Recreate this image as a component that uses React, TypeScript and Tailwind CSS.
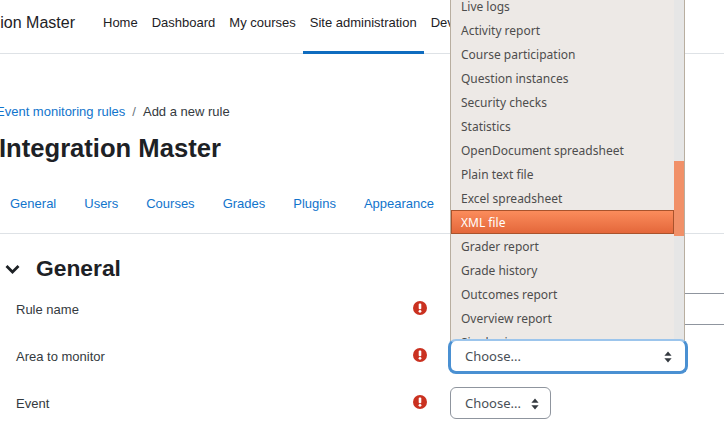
const mainNav = ['Home', 'Dashboard', 'My courses'];
const tabs = ['General', 'Users', 'Courses', 'Grades', 'Plugins', 'Appearance'];
const before = ['Live logs', 'Activity report', 'Course participation', 'Question instances', 'Security checks', 'Statistics', 'OpenDocument spreadsheet', 'Plain text file', 'Excel spreadsheet'];
const after = ['Grader report', 'Grade history', 'Outcomes report', 'Overview report', 'Single view'];

function Alert() {
  return (
    <svg className="w-[14px] h-[14px]" viewBox="0 0 14 14">
      <circle cx="7" cy="7" r="7" fill="#ca3120" />
      <rect x="5.7" y="2.6" width="2.6" height="5.6" rx="1" fill="#fff" />
      <circle cx="7" cy="10.3" r="1.4" fill="#fff" />
    </svg>
  );
}

function Arrows() {
  return (
    <svg className="w-2 h-3" viewBox="0 0 8 12" fill="#343a40">
      <path d="M4 0.5 L7.6 4.8 H0.4 Z" />
      <path d="M4 11.5 L7.6 7.2 H0.4 Z" />
    </svg>
  );
}

function Row({ label, children }: { label: string; children?: React.ReactNode }) {
  return (
    <div className="flex items-center h-[47px]">
      <div className="w-[413px] pl-4 text-[13px] text-[#343a40]">{label}</div>
      <div className="w-[37px] -mt-[3px]"><Alert /></div>
      {children}
    </div>
  );
}

export default function App() {
  return (
    <div className="relative h-[429px] w-[724px] overflow-hidden bg-white font-['Liberation_Sans',Arial,sans-serif]">
      {/* Top nav */}
      <header className="flex h-[54px] items-stretch border-b border-[#dee2e6]">
        <div className="flex w-[96px] items-center justify-end overflow-hidden pb-[8px] pr-[21px] text-[16px] text-[#1d2125] whitespace-nowrap">
          ion Master
        </div>
        {mainNav.map(n => (
          <a key={n} className="flex items-center px-[7px] pb-[8px] text-[13px] text-[#1d2125]">{n}</a>
        ))}
        <a className="-mb-px flex items-center border-b-[3px] border-[#0f6cbf] px-[7px] pb-[6px] text-[13px] text-[#1d2125]">Site administration</a>
        <a className="flex items-center px-[7px] pb-[8px] text-[13px] text-[#1d2125]">Dev</a>
      </header>

      {/* Breadcrumb + title */}
      <div className="mt-[50px] flex items-center -ml-[4px] text-[13px] leading-4">
        <a className="text-[#1174cc]">Event monitoring rules</a>
        <span className="mx-[7px] text-[#6a737b]">/</span>
        <span className="text-[#343a40]">Add a new rule</span>
      </div>
      <h1 className="mt-[12px] -ml-[1px] text-[25.6px] leading-8 font-bold text-[#1d2125]">Integration Master</h1>

      {/* Tabs */}
      <nav className="mt-[14px] flex h-[56px] items-center gap-[28px] border-b border-[#dee2e6] pb-[3px] pl-[10px] text-[13px] text-[#1174cc]">
        {tabs.map(t => <a key={t}>{t}</a>)}
      </nav>

      {/* Form */}
      <div className="mt-[21px] flex items-center h-[26px] pl-[5px]">
        <svg className="w-[15px] h-[15px]" viewBox="0 0 15 15" fill="none" stroke="#1d2125" strokeWidth="2.8">
          <path d="M1.5 5 L7.5 11 L13.5 5" />
        </svg>
        <h2 className="ml-4 text-[22.8px] font-bold text-[#1d2125]">General</h2>
      </div>
      <div className="mt-[5px]">
        <Row label="Rule name" />
        <Row label="Area to monitor" />
        <Row label="Event">
          <button className="-mt-[2px] flex h-[32px] w-[101px] items-center justify-between rounded-[6px] border border-[#8f959e] bg-white pl-[14px] pr-[11px] pt-[2px] font-['Noto_Sans',sans-serif] text-[13px] text-[#495057]">
            Choose...
            <Arrows />
          </button>
        </Row>
      </div>

      {/* Inputs partly hidden by the list */}
      <div className="absolute left-[685px] top-[293px] h-px w-[39px] bg-[#8f959e]" />
      <div className="absolute left-[685px] top-[324px] h-px w-[39px] bg-[#8f959e]" />

      {/* Open select list */}
      <div className="absolute left-[450px] top-0 flex h-[341px] w-[235px] overflow-hidden border-x border-[#b8aea0] bg-[#ede9e6] font-['Noto_Sans',sans-serif] text-[12px] text-[#4d4d4d]">
        <ul className="-mt-[6px] flex-1 min-w-0">
          {before.map(i => <li key={i} className="flex h-6 items-center pl-[10px] pt-[2px]">{i}</li>)}
          <li className="flex h-6 items-center border border-[#a9532c] bg-gradient-to-b from-[#fb8c5c] to-[#e4673a] pl-[9px] pt-[1px] text-white">XML file</li>
          {after.map(i => <li key={i} className="flex h-6 items-center pl-[10px] pt-[2px]">{i}</li>)}
        </ul>
        <div className="w-[10px] shrink-0 bg-[#e6e6e6] pt-[161px]">
          <div className="h-[75px] bg-[#f19068]" />
        </div>
      </div>

      {/* Focused select */}
      <button className="absolute left-[448px] top-[339px] flex h-[35px] w-[240px] items-center justify-between rounded-[8px] border-[3px] border-[#4a90d2] border-t-2 border-t-[#9cc5ec] bg-white pl-[14px] pr-[13px] pt-[1px] font-['Noto_Sans',sans-serif] text-[13px] text-[#495057]">
        Choose...
        <Arrows />
      </button>
    </div>
  );
}
